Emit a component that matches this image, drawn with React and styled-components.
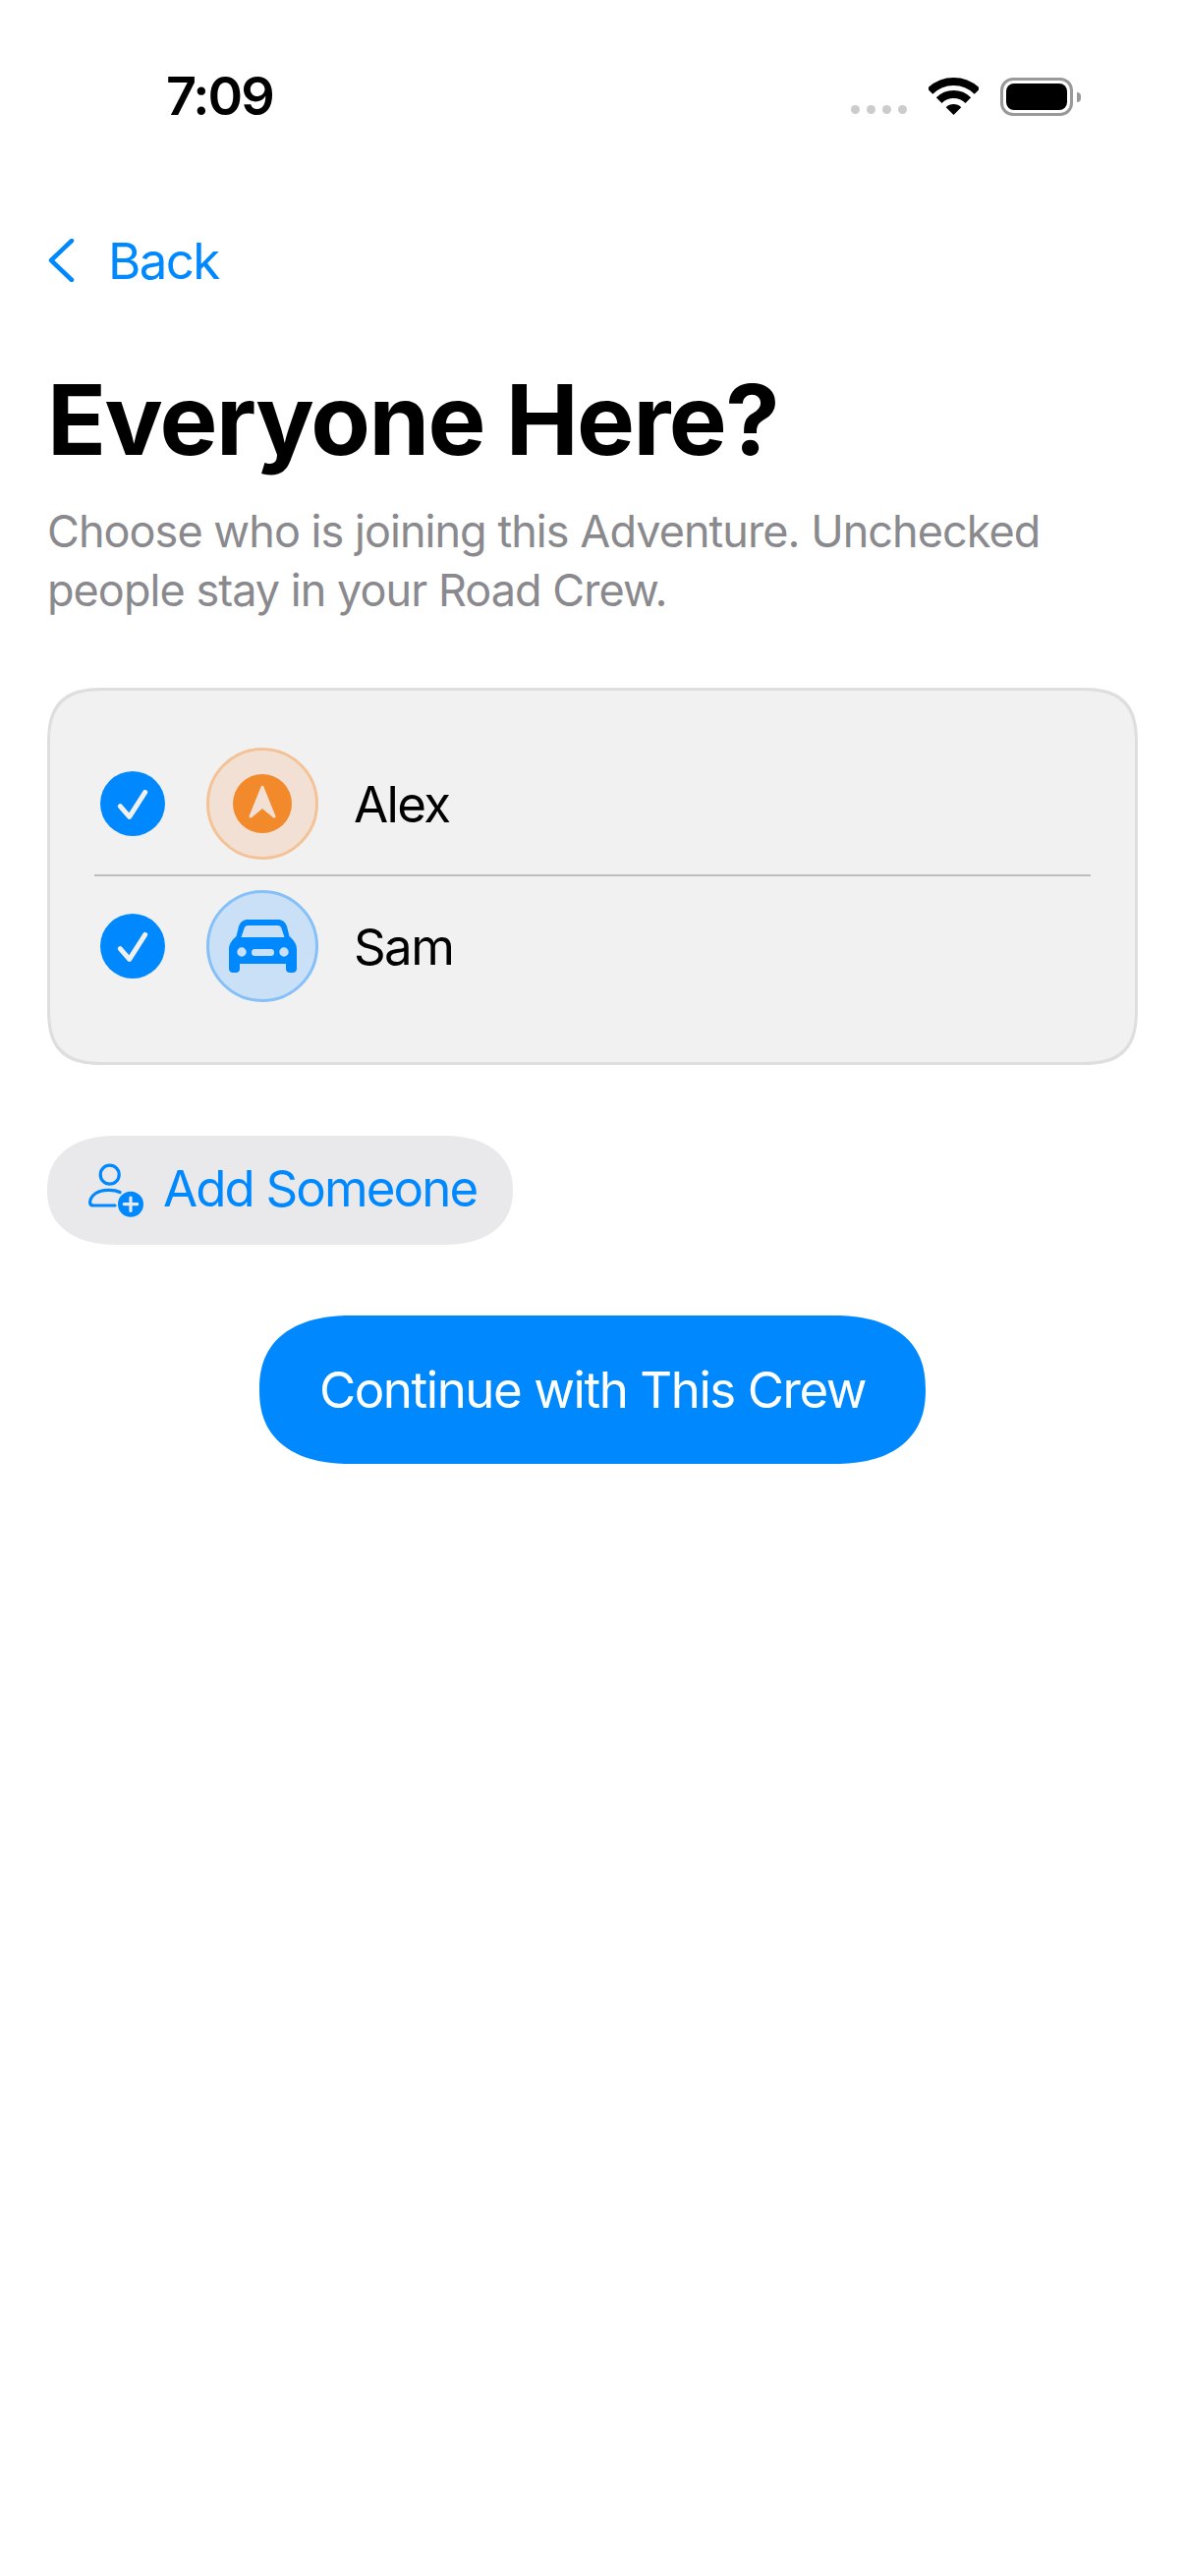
import styled, { createGlobalStyle } from "styled-components";

const GlobalStyle = createGlobalStyle`
  html, body {
    margin: 0;
    padding: 0;
    background: #fff;
    font-family: Inter, "Liberation Sans", sans-serif;
  }
`;

const BLUE = "#0088ff";

const Page = styled.div`
  width: 1206px;
  height: 2622px;
  box-sizing: border-box;
  padding: 0 48px;
  display: flex;
  flex-direction: column;
  overflow: hidden;
`;

const StatusBar = styled.div`
  height: 40px;
  margin-top: 78px;
  display: flex;
  align-items: center;
  justify-content: space-between;
  padding: 0 66px 0 121px;
`;
const Time = styled.div`
  font-size: 54px;
  line-height: 40px;
  font-weight: 600;
  letter-spacing: -2px;
  color: #000;
`;
const StatusIcons = styled.div`
  display: flex;
  align-items: flex-end;
`;
const Dots = styled.div`
  display: flex;
  gap: 6.5px;
  margin-right: 22px;
  margin-bottom: 1px;
`;
const Dot = styled.span`
  width: 9.5px;
  height: 9.5px;
  border-radius: 50%;
  background: #cccccc;
`;
const Battery = styled.div`
  position: relative;
  box-sizing: border-box;
  width: 74px;
  height: 39px;
  margin-left: 22px;
  margin-bottom: -1px;
  padding: 3px;
  border: 3px solid #999;
  border-radius: 13px;
  &::after {
    content: "";
    position: absolute;
    right: -11px;
    top: 12px;
    width: 4px;
    height: 10px;
    border-radius: 0 5px 5px 0;
    background: #999;
  }
`;
const BatteryFill = styled.div`
  width: 100%;
  height: 100%;
  background: #000;
  border-radius: 8px;
`;

const BackLink = styled.div`
  margin-top: 120px;
  height: 54px;
  display: flex;
  align-items: center;
  gap: 34px;
  color: ${BLUE};
  font-size: 51px;
  letter-spacing: -1.6px;
`;

const Title = styled.h1`
  margin: 73px 0 0;
  font-size: 99px;
  line-height: 124px;
  font-weight: 700;
  color: #000;
  letter-spacing: -1.6px;
`;
const Subtitle = styled.p`
  margin: 22px 0 0;
  font-size: 45px;
  line-height: 60px;
  letter-spacing: -0.96px;
  color: #8a8a8e;
`;

const Card = styled.div`
  box-sizing: border-box;
  margin-top: 69px;
  height: 384px;
  padding: 43px 45px 0;
  background: #f1f1f1;
  border: 3px solid #dedede;
  border-radius: 60px;
  corner-shape: superellipse(1.5);
`;
const Row = styled.div`
  height: 144px;
  display: flex;
  align-items: center;
  padding-left: 6px;
  box-sizing: border-box;
  border-top: ${(props) => (props.$divided ? "2px solid #bcbcbc" : "none")};
`;
const CheckCircle = styled.div`
  width: 66px;
  height: 66px;
  border-radius: 50%;
  background: ${BLUE};
  flex-shrink: 0;
`;
const Avatar = styled.div`
  box-sizing: border-box;
  width: 114px;
  height: 114px;
  margin-left: 42px;
  border-radius: 50%;
  border: 3px solid ${(props) => props.$ring};
  background: ${(props) => props.$fill};
  display: flex;
  align-items: center;
  justify-content: center;
  flex-shrink: 0;
`;
const Name = styled.div`
  margin-left: 36px;
  font-size: 51px;
  letter-spacing: -1.6px;
  color: #000;
`;

const AddButton = styled.div`
  align-self: flex-start;
  box-sizing: border-box;
  margin-top: 72px;
  height: 111px;
  padding: 0 37px 0 42px;
  display: flex;
  align-items: center;
  gap: 20px;
  border-radius: 72px / 56px;
  corner-shape: superellipse(1.2);
  background: #e9e9ec;
  color: ${BLUE};
  font-size: 51px;
  letter-spacing: -1.9px;
`;
const AddLabel = styled.span`
  margin-bottom: 5px;
`;

const ContinueButton = styled.div`
  align-self: center;
  box-sizing: border-box;
  margin-top: 72px;
  width: 678px;
  height: 151px;
  display: flex;
  align-items: center;
  justify-content: center;
  border-radius: 96px / 76px;
  corner-shape: superellipse(1.25);
  background: ${BLUE};
  color: #fff;
  font-size: 51px;
  letter-spacing: -1.45px;
`;

const WifiIcon = () => (
  <svg width="51" height="38" viewBox="0 0 51 38">
    <path d="M1.46 13.96A34 34 0 0 1 49.54 13.96" fill="none" stroke="#000" strokeWidth="8" />
    <path d="M10.65 23.15A21 21 0 0 1 40.35 23.15" fill="none" stroke="#000" strokeWidth="8" />
    <path d="M25.5 38L17.72 30.22A11 11 0 0 1 33.28 30.22Z" fill="#000" />
  </svg>
);

const Chevron = () => (
  <svg width="28" height="44" viewBox="0 0 28 44">
    <path d="M25 2L4 22L25 42" fill="none" stroke={BLUE} strokeWidth="4.5" strokeLinecap="round" strokeLinejoin="round" />
  </svg>
);

const CheckIcon = () => (
  <svg width="66" height="66" viewBox="0 0 66 66">
    <path d="M20.3 35.7L29.7 46.3L45.7 21.3" fill="none" stroke="#f0f0f0" strokeWidth="5" strokeLinecap="round" strokeLinejoin="round" />
  </svg>
);

const ArrowBadge = () => (
  <svg width="60" height="60" viewBox="0 0 60 60">
    <circle cx="30" cy="30" r="30" fill="#f2892b" />
    <path
      d="M30 13.2L42 43L30 33L18 43Z"
      fill="#f1e0d3"
      stroke="#f1e0d3"
      strokeWidth="3"
      strokeLinejoin="round"
    />
  </svg>
);

const CarIcon = () => (
  <svg width="69" height="54" viewBox="0 0 69 54">
    <path
      fillRule="evenodd"
      fill={BLUE}
      d="M19 0H50C54 0 57.5 2.5 59 7L61.5 17C66 21 69 25 69 30V50C69 52.5 67 54 65 54H62C59.5 54 58 52.5 58 50V45H11V50C11 52.5 9.5 54 7 54H4C2 54 0 52.5 0 50V30C0 25 3 21 7.5 17L10 7C11.5 2.5 15 0 19 0ZM19.5 6C17.5 6 16 7 15.5 9L12.5 18H56.5L53.5 9C53 7 51.500 6 49.500 6ZM13 28.300A4.700 4.700 0 1 0 13 37.700A4.700 4.700 0 1 0 13 28.300ZM56 28.300A4.700 4.700 0 1 0 56 37.700A4.700 4.700 0 1 0 56 28.300ZM26 30C24 30 23 31.500 23 33.500C23 35.500 24 37 26 37H43C45 37 46 35.500 46 33.500C46 31.500 45 30 43 30Z"
    />
  </svg>
);

const AddPersonIcon = () => (
  <svg width="56" height="55" viewBox="0 0 56 55">
    <circle cx="21.700" cy="11.700" r="9.500" fill="none" stroke={BLUE} strokeWidth="3.200" />
    <path
      d="M32 29.500C26 26.500 14 26.500 7.500 30.500C3 33.500 1 38 1.800 41C2.200 42.500 3.500 43 5 43H27"
      fill="none"
      stroke={BLUE}
      strokeWidth="3.200"
      strokeLinecap="round"
    />
    <circle cx="43" cy="41.700" r="13" fill={BLUE} />
    <path d="M43 35V48.400M36.300 41.700H49.700" stroke="#e9e9ec" strokeWidth="3.200" strokeLinecap="round" />
  </svg>
);

const crew = [
  { name: "Alex", ring: "#f3c397", fill: "#f1e0d3", icon: <ArrowBadge /> },
  { name: "Sam", ring: "#86c0f8", fill: "#c9e0f6", icon: <CarIcon /> },
];

export default function App() {
  return (
    <>
      <GlobalStyle />
      <Page>
        <StatusBar>
          <Time>7:09</Time>
          <StatusIcons>
            <Dots>
              <Dot />
              <Dot />
              <Dot />
              <Dot />
            </Dots>
            <WifiIcon />
            <Battery>
              <BatteryFill />
            </Battery>
          </StatusIcons>
        </StatusBar>
        <BackLink>
          <Chevron />
          Back
        </BackLink>
        <Title>Everyone Here?</Title>
        <Subtitle>
          Choose who is joining this Adventure. Unchecked
          <br />
          people stay in your Road Crew.
        </Subtitle>
        <Card>
          {crew.map((person, i) => (
            <Row key={person.name} $divided={i > 0}>
              <CheckCircle>
                <CheckIcon />
              </CheckCircle>
              <Avatar $ring={person.ring} $fill={person.fill}>
                {person.icon}
              </Avatar>
              <Name>{person.name}</Name>
            </Row>
          ))}
        </Card>
        <AddButton>
          <AddPersonIcon />
          <AddLabel>Add Someone</AddLabel>
        </AddButton>
        <ContinueButton>Continue with This Crew</ContinueButton>
      </Page>
    </>
  );
}
